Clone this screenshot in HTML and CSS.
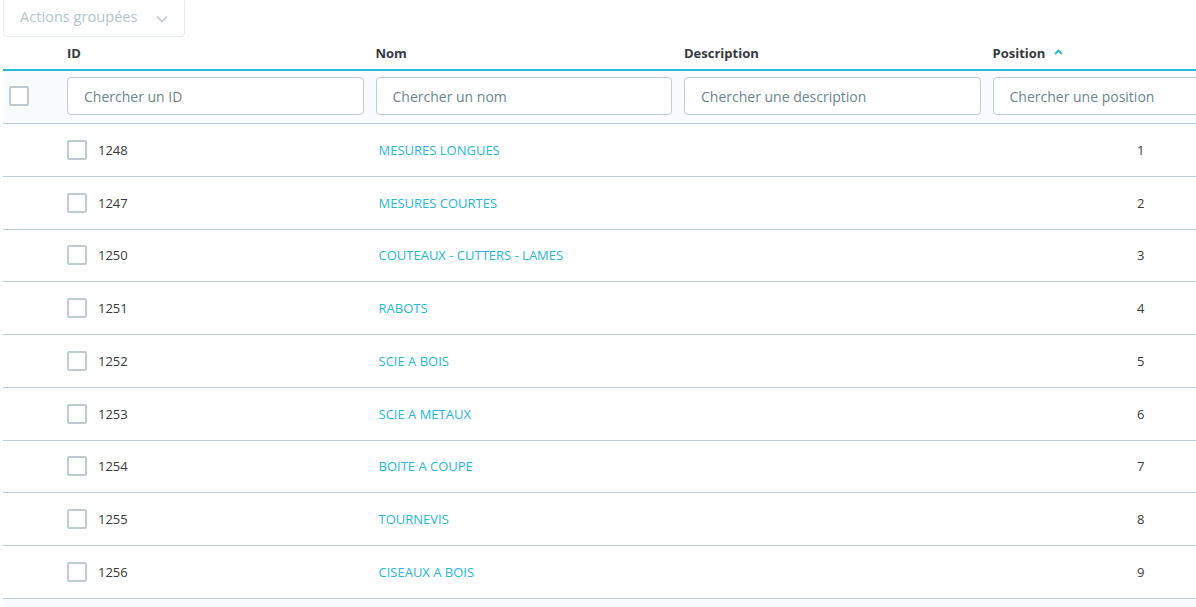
FILE: index.html
```html
<!DOCTYPE html>
<html lang="fr">
<head>
<meta charset="utf-8">
<link rel="stylesheet" href="styles.css">
</head>
<body>
<div class="page">
  <div class="toolbar">
    <button class="bulk" disabled>
      <span>Actions groupées</span>
      <svg class="chev" width="12" height="8" viewBox="0 0 12 8"><path d="M1 1.5l5 5 5-5" fill="none" stroke="#b7ced3" stroke-width="1.6"/></svg>
    </button>
  </div>
  <div class="grid">
    <div class="row head">
      <div class="cell sel"></div>
      <div class="cell">ID</div>
      <div class="cell">Nom</div>
      <div class="cell">Description</div>
      <div class="cell">Position <svg class="sort" width="9" height="6" viewBox="0 0 9 6"><path d="M1 5l3.5-3.5L8 5" fill="none" stroke="#25b9d7" stroke-width="1.8"/></svg></div>
    </div>
    <div class="row filters">
      <div class="cell sel"><span class="cb"></span></div>
      <div class="cell"><input class="inp" placeholder="Chercher un ID"></div>
      <div class="cell"><input class="inp" placeholder="Chercher un nom"></div>
      <div class="cell"><input class="inp" placeholder="Chercher une description"></div>
      <div class="cell"><input class="inp" placeholder="Chercher une position"></div>
    </div>
    <div class="row data"><div class="cell sel"></div><div class="cell idc"><span class="cb"></span>1248</div><div class="cell"><a class="lnk">MESURES LONGUES</a></div><div class="cell"></div><div class="cell pos">1</div></div>
    <div class="row data"><div class="cell sel"></div><div class="cell idc"><span class="cb"></span>1247</div><div class="cell"><a class="lnk">MESURES COURTES</a></div><div class="cell"></div><div class="cell pos">2</div></div>
    <div class="row data"><div class="cell sel"></div><div class="cell idc"><span class="cb"></span>1250</div><div class="cell"><a class="lnk">COUTEAUX - CUTTERS - LAMES</a></div><div class="cell"></div><div class="cell pos">3</div></div>
    <div class="row data"><div class="cell sel"></div><div class="cell idc"><span class="cb"></span>1251</div><div class="cell"><a class="lnk">RABOTS</a></div><div class="cell"></div><div class="cell pos">4</div></div>
    <div class="row data"><div class="cell sel"></div><div class="cell idc"><span class="cb"></span>1252</div><div class="cell"><a class="lnk">SCIE A BOIS</a></div><div class="cell"></div><div class="cell pos">5</div></div>
    <div class="row data"><div class="cell sel"></div><div class="cell idc"><span class="cb"></span>1253</div><div class="cell"><a class="lnk">SCIE A METAUX</a></div><div class="cell"></div><div class="cell pos">6</div></div>
    <div class="row data"><div class="cell sel"></div><div class="cell idc"><span class="cb"></span>1254</div><div class="cell"><a class="lnk">BOITE A COUPE</a></div><div class="cell"></div><div class="cell pos">7</div></div>
    <div class="row data"><div class="cell sel"></div><div class="cell idc"><span class="cb"></span>1255</div><div class="cell"><a class="lnk">TOURNEVIS</a></div><div class="cell"></div><div class="cell pos">8</div></div>
    <div class="row data"><div class="cell sel"></div><div class="cell idc"><span class="cb"></span>1256</div><div class="cell"><a class="lnk">CISEAUX A BOIS</a></div><div class="cell"></div><div class="cell pos">9</div></div>
    <div class="row tail"></div>
  </div>
</div>
</body>
</html>
```
FILE: styles.css
```css
html, body {
  margin: 0;
  padding: 0;
  background: #fff;
  overflow: hidden;
}
body {
  font-family: "Open Sans", "Noto Sans", sans-serif;
  color: #363a41;
  width: 1196px;
  height: 607px;
}
.page {
  padding-left: 3px;
  width: 1193px;
  overflow: hidden;
}
.toolbar {
  height: 37px;
  position: relative;
}
.bulk {
  position: absolute;
  left: 0;
  top: -2px;
  width: 182px;
  height: 39px;
  border: 1px solid #e5ecee;
  border-radius: 4px;
  background: #fff;
  display: flex;
  align-items: center;
  justify-content: space-between;
  padding: 0 16px 4px 16px;
  box-sizing: border-box;
  font-family: "Open Sans", sans-serif;
  font-size: 14.6px;
  color: #b3c7cd;
}
.bulk .chev { margin-top: 6px; margin-right: 0; }
.grid {
  width: 1292px;
}
.row {
  display: grid;
  grid-template-columns: 58px 308.5px 308.5px 308.5px 308.5px;
  box-sizing: border-box;
}
.cell {
  padding: 0 6px;
  display: flex;
  align-items: center;
  min-width: 0;
}
.head {
  height: 34px;
  border-bottom: 2px solid #25b9d7;
  font-size: 13px;
  font-weight: 700;
  color: #363a41;
}
.head .cell { padding-bottom: 1px; }
.sort { margin-left: 9px; margin-top: -2px; }
.filters {
  height: 53px;
  background: #fafbfc;
  border-bottom: 1px solid #bbcdd2;
}
.filters .cell { padding-top: 6px; padding-bottom: 8px; box-sizing: border-box; }
.inp {
  width: 100%;
  height: 38px;
  box-sizing: border-box;
  border: 1px solid #bbcdd2;
  border-radius: 4px;
  background: #fff;
  padding: 0 16px;
  font-family: "Open Sans", sans-serif;
  font-size: 14px;
  color: #363a41;
  outline: none;
}
.inp::placeholder { color: #6c868e; opacity: 1; }
.cb {
  display: inline-block;
  width: 20px;
  height: 20px;
  box-sizing: border-box;
  border: 2px solid #bbcdd2;
  border-radius: 2px;
  background: #fff;
  flex: none;
}
.data {
  height: 52.78px;
  border-bottom: 1px solid #bbcdd2;
  font-size: 13px;
}
.idc .cb { margin-right: 11px; }
.lnk {
  color: #25b9d7;
  font-size: 13px;
  text-decoration: none;
  margin-left: 3px;
}
.pos { justify-content: center; }
.tail {
  height: 20px;
  background: #fafbfc;
}
```
